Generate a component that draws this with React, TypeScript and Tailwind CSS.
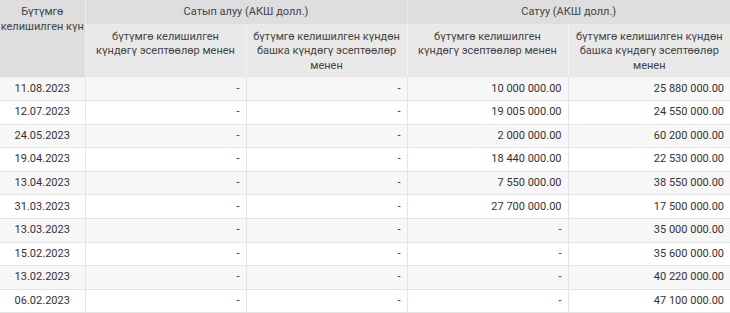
import React from "react";

const rows = [
  ["11.08.2023", "-", "-", "10 000 000.00", "25 880 000.00"],
  ["12.07.2023", "-", "-", "19 005 000.00", "24 550 000.00"],
  ["24.05.2023", "-", "-", "2 000 000.00", "60 200 000.00"],
  ["19.04.2023", "-", "-", "18 440 000.00", "22 530 000.00"],
  ["13.04.2023", "-", "-", "7 550 000.00", "38 550 000.00"],
  ["31.03.2023", "-", "-", "27 700 000.00", "17 500 000.00"],
  ["13.03.2023", "-", "-", "-", "35 000 000.00"],
  ["15.02.2023", "-", "-", "-", "35 600 000.00"],
  ["13.02.2023", "-", "-", "-", "40 220 000.00"],
  ["06.02.2023", "-", "-", "-", "47 100 000.00"],
];

export default function App() {
  return (
    <div className="w-[730px] h-[313px] overflow-hidden bg-white font-['Roboto',sans-serif] text-[11px] text-[#333]">
      <table className="w-[730px] table-fixed border-collapse">
        <colgroup>
          <col className="w-[85px]" />
          <col className="w-[161px]" />
          <col className="w-[161px]" />
          <col className="w-[161px]" />
          <col className="w-[162px]" />
        </colgroup>
        <thead className="text-[#444] leading-[14.5px]">
          <tr className="h-[24px]">
            <th
              rowSpan={2}
              className="bg-[#dedede] border border-[#ececec] border-t-0 border-l-0 px-0 pt-[5px] align-top font-normal"
            >
              Бүтүмгө келишилген күн
            </th>
            <th colSpan={2} className="bg-[#dedede] border border-[#ececec] border-t-0 font-normal">
              Сатып алуу (АКШ долл.)
            </th>
            <th colSpan={2} className="bg-[#dedede] border border-[#ececec] border-t-0 border-r-0 font-normal">
              Сатуу (АКШ долл.)
            </th>
          </tr>
          <tr className="h-[53px]">
            <th className="bg-[#e9e9e9] border border-[#f2f2f2] px-[6px] pt-[5px] align-top font-normal">
              бүтүмгө келишилген күндөгү эсептөөлөр менен
            </th>
            <th className="bg-[#e9e9e9] border border-[#f2f2f2] px-[6px] pt-[5px] align-top font-normal">
              бүтүмгө келишилген күндөн башка күндөгү эсептөөлөр менен
            </th>
            <th className="bg-[#e9e9e9] border border-[#f2f2f2] px-[6px] pt-[5px] align-top font-normal">
              бүтүмгө келишилген күндөгү эсептөөлөр менен
            </th>
            <th className="bg-[#e9e9e9] border border-[#f2f2f2] border-r-0 px-[6px] pt-[5px] align-top font-normal">
              бүтүмгө келишилген күндөн башка күндөгү эсептөөлөр менен
            </th>
          </tr>
        </thead>
        <tbody>
          {rows.map((r, i) => (
            <tr key={r[0] + i} className={`h-[23.6px] ${i % 2 === 0 ? "bg-[#f7f7f7]" : "bg-white"}`}>
              <td className="border border-[#e4e4e4] border-l-0 text-center px-1">{r[0]}</td>
              <td className="border border-[#e4e4e4] text-right px-[6px]">{r[1]}</td>
              <td className="border border-[#e4e4e4] text-right px-[6px]">{r[2]}</td>
              <td className="border border-[#e4e4e4] text-right px-[6px]">{r[3]}</td>
              <td className="border border-[#e4e4e4] border-r-0 text-right px-[6px]">{r[4]}</td>
            </tr>
          ))}
        </tbody>
      </table>
    </div>
  );
}
